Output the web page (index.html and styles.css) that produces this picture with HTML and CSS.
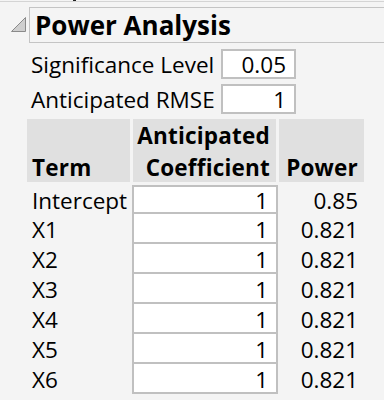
FILE: index.html
```html
<!DOCTYPE html>
<html>
<head>
<meta charset="utf-8">
<link rel="stylesheet" href="styles.css">
</head>
<body>
<div class="top-edge"><span class="frag"></span></div>
<div class="outline-head">
  <svg class="tri" width="16" height="16" viewBox="0 0 16 16"><polygon points="15.5,0.5 15.5,14.5 1.5,14.5" fill="#cfcfcf" stroke="#8a8a8a" stroke-width="1"/></svg>
  <div class="title-box"><span class="title">Power Analysis</span></div>
</div>
<div class="content">
  <div class="param"><span class="plabel">Significance Level</span><span class="pbox">0.05</span></div>
  <div class="param"><span class="plabel">Anticipated RMSE</span><span class="pbox">1</span></div>
  <div class="table">
    <div class="th th-term">Term</div>
    <div class="th th-coef">Anticipated<br>Coefficient</div>
    <div class="th th-pow">Power</div>

    <div class="td term r1">Intercept</div><div class="td coef r1">1</div><div class="td pow r1">0.85</div>
    <div class="td term">X1</div><div class="td coef">1</div><div class="td pow">0.821</div>
    <div class="td term">X2</div><div class="td coef">1</div><div class="td pow">0.821</div>
    <div class="td term">X3</div><div class="td coef">1</div><div class="td pow">0.821</div>
    <div class="td term">X4</div><div class="td coef">1</div><div class="td pow">0.821</div>
    <div class="td term">X5</div><div class="td coef">1</div><div class="td pow">0.821</div>
    <div class="td term">X6</div><div class="td coef">1</div><div class="td pow">0.821</div>
  </div>
</div>
</body>
</html>
```
FILE: styles.css
```css
html, body {
  margin: 0;
  padding: 0;
}
body {
  background: #f4f4f4;
  font-family: "Open Sans", "Noto Sans", sans-serif;
  color: #000;
  width: 384px;
  height: 400px;
  overflow: hidden;
}
.top-edge {
  height: 1px;
  border-bottom: 1px solid #d4d4d4;
  position: relative;
}
.frag {
  position: absolute;
  left: 73px;
  top: 0;
  width: 3px;
  height: 1px;
  background: #222;
}
.outline-head {
  display: flex;
  align-items: flex-start;
  padding-top: 5px;
  padding-left: 10px;
}
.tri {
  margin-top: 10px;
  flex: none;
}
.title-box {
  margin-left: 3px;
  flex: 1;
  height: 34px;
  border: 1px solid #c4c4c4;
  border-right: none;
  margin-right: -2px;
}
.title {
  display: block;
  font-weight: bold;
  font-size: 26px;
  line-height: 34px;
  padding-left: 5px;
}
.content {
  padding-left: 31px;
  padding-top: 6px;
}
.param {
  display: flex;
  align-items: flex-start;
  height: 30px;
  margin-bottom: 5px;
  font-size: 22.5px;
}
.plabel {
  width: 190px;
  line-height: 32px;
}
.pbox {
  box-sizing: border-box;
  width: 75px;
  height: 30px;
  background: #fff;
  border: 2px solid #c0c0c0;
  text-align: right;
  padding-right: 8px;
  line-height: 28px;
}
.table {
  display: grid;
  grid-template-columns: 105px 146px 86px;
  margin-left: -4px;
  font-size: 22.5px;
}
.th {
  background: #e0e0e0;
  font-weight: bold;
  letter-spacing: 0.2px;
  height: 63px;
  line-height: 32px;
  box-sizing: border-box;
  padding-top: 1px;
}
.th-term { padding-left: 5px; margin-right: 2px; padding-top: 33px; }
.th-coef { text-align: right; padding-right: 6px; margin-left: 1px; margin-right: 2px; }
.th-pow { text-align: right; padding-right: 6px; margin-left: 1px; padding-top: 33px; }
.td {
  height: 30px;
  line-height: 32px;
  box-sizing: border-box;
}
.term { padding-left: 5px; }
.coef {
  background: #fff;
  border: 2px solid #c0c0c0;
  border-top: none;
  text-align: right;
  padding-right: 8px;
}
.pow { text-align: right; padding-right: 6px; }
.td.r1 {
  height: 32px;
  padding-top: 5px;
  line-height: 28px;
}
.coef.r1 {
  margin-top: 3px;
  height: 29px;
  padding-top: 0;
  border-top: 2px solid #c0c0c0;
}
```
